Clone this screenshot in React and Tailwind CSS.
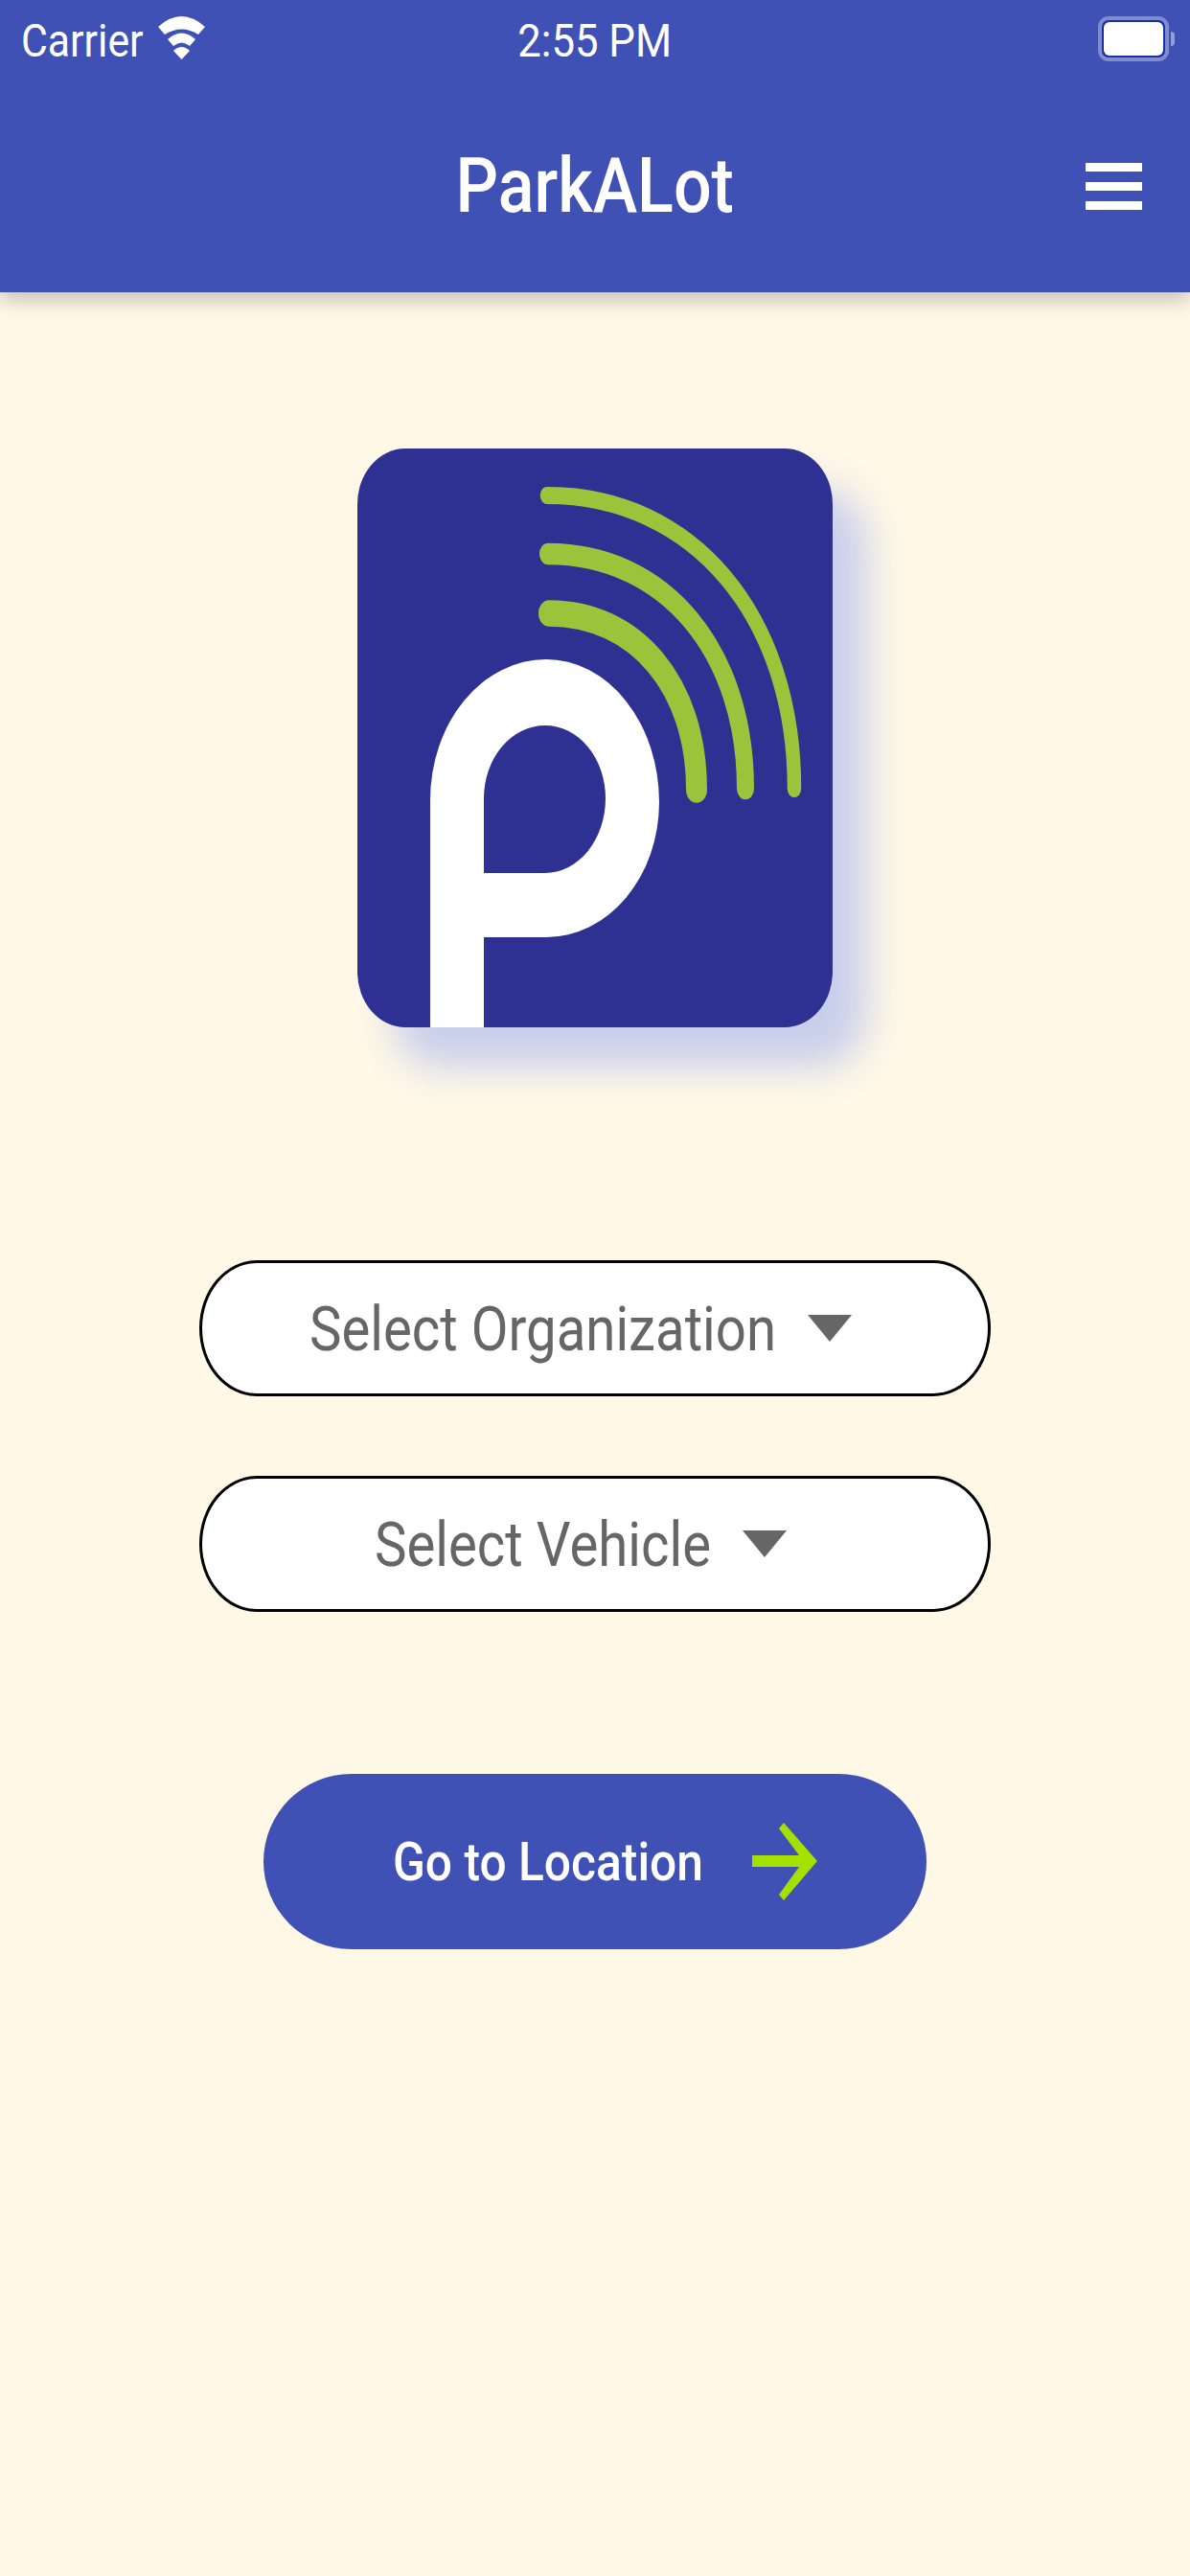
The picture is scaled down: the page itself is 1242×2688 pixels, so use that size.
import React from "react";

const font = "font-['Roboto','Liberation_Sans',sans-serif]";

function WifiIcon() {
  return (
    <svg width="49" height="45" viewBox="0 0 49 45" className="ml-[16px] mt-[-2px]">
      <path d="M0 11 Q24.5 -11 49 11 L42 19 Q24.5 8 7 19 Z" fill="#fff" />
      <path d="M10 24 Q24.5 11 39 24 L33 31 Q24.5 24 16 31 Z" fill="#fff" />
      <path d="M16 36 Q24.5 28 33 36 L24.5 45 Z" fill="#fff" />
    </svg>
  );
}

function Battery() {
  return (
    <div className="flex items-center mr-[-6px]">
      <div className="w-[74px] h-[47px] rounded-[11px] border-[4px] border-white/45 bg-[#1a2fa8] p-[2px]">
        <div className="w-full h-full rounded-[6px] bg-white" />
      </div>
      <div className="w-[4px] h-[15px] ml-[2px] rounded-r-full bg-white/45" />
    </div>
  );
}

function Logo() {
  return (
    <div className="w-[496px] h-[604px] overflow-hidden rounded-[50px/58px] bg-[#2e3192] shadow-[36px_42px_40px_#c9cfeb]">
      <svg width="496" height="604" viewBox="0 0 496 604" className="block">
        <path
          fill="#fff"
          fillRule="evenodd"
          d="M76 604 V367 A121 147 0 0 1 197 220 A118 149 0 0 1 315 369 A118 141 0 0 1 197 510 H132 V604 Z M132 443 H196 A63 78 0 0 0 259 365 A63 76 0 0 0 196 289 A64 76 0 0 0 132 365 Z"
        />
        {/* signal arcs, stretched vertically like the mark */}
        <g transform="scale(1 1.25)" fill="none" stroke="#9dc33b" strokeLinecap="round">
          <path strokeWidth="22" d="M200 137.6 C290.9 137.6 354 197.9 354 284.8" />
          <path strokeWidth="18" d="M199 88 C320.5 88 405 168.4 405 284" />
          <path strokeWidth="14.5" d="M198 39.2 C350.2 39.2 456 139.6 456 284" />
        </g>
      </svg>
    </div>
  );
}

function SelectBox({ label, textClass }) {
  return (
    <button className="w-[826px] h-[142px] rounded-[60px/71px] border-[3px] border-black bg-white flex items-center justify-center pr-[30px]">
      <span className={`inline-block text-left text-[64px] leading-none text-[#666] origin-left scale-x-[0.88] translate-y-[2px] whitespace-nowrap ${textClass}`}>
        {label}
      </span>
      <svg width="46" height="28" viewBox="0 0 46 28" className="ml-[37px]">
        <path d="M0 0 H46 L23 28 Z" fill="#666" />
      </svg>
    </button>
  );
}

export default function App() {
  return (
    <div className={`min-h-screen bg-[#fff8e7] ${font}`}>
      <header className="h-[305px] bg-[#3f51b5] text-white shadow-[0_8px_20px_rgba(0,0,0,0.22)] px-[22px]">
        <div className="grid grid-cols-3 items-center pt-[16px] h-[63px]">
          <div className="flex items-center">
            <span className="inline-block w-[127px] text-[48px] leading-none origin-left scale-x-[0.89] whitespace-nowrap translate-y-[3px]">Carrier</span>
            <WifiIcon />
          </div>
          <div className="text-center text-[48px] leading-none whitespace-nowrap scale-x-[0.91] translate-y-[3px]">2:55 PM</div>
          <div className="flex justify-end">
            <Battery />
          </div>
        </div>
        <div className="grid grid-cols-3 items-center mt-[86px]">
          <div />
          <h1 className="text-center text-[80px] leading-[90px] font-medium whitespace-nowrap scale-x-[0.875]">ParkALot</h1>
          <div className="flex flex-col items-end gap-[11px] pr-[28px]">
            <div className="w-[59px] h-[9px] bg-white" />
            <div className="w-[59px] h-[9px] bg-white" />
            <div className="w-[59px] h-[9px] bg-white" />
          </div>
        </div>
      </header>

      <main className="flex flex-col items-center">
        <div className="mt-[163px]">
          <Logo />
        </div>
        <div className="mt-[243px] flex flex-col gap-[83px]">
          <SelectBox label="Select Organization" textClass="w-[483px]" />
          <SelectBox label="Select Vehicle" textClass="w-[347px]" />
        </div>
        <button className="mt-[169px] w-[692px] h-[183px] rounded-[92px] bg-[#3f51b5] flex items-center justify-center pl-[20px] text-white">
          <span className="inline-block w-[322px] text-left text-[56px] leading-none font-medium origin-left scale-x-[0.888] whitespace-nowrap">Go to Location</span>
          <svg width="68" height="81" viewBox="0 0 68 81" className="ml-[53px]">
            <path d="M28 6 L33 0 L68 40 L33 81 L28 75 L49 46 H0 V34 H49 Z" fill="#a4e000" />
          </svg>
        </button>
      </main>
    </div>
  );
}
